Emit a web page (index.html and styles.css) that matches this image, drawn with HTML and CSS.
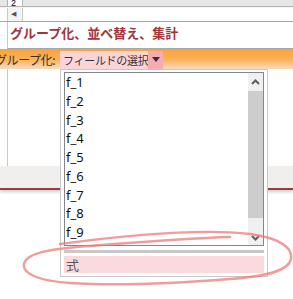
FILE: index.html
```html
<!DOCTYPE html>
<html>
<head>
    <title>グループ化、並べ替え、集計</title>
    <link rel="stylesheet" href="styles.css">
</head>
<body>
    <div class="topstrip">
        <div class="tab">2</div>
    </div>
    <div class="hscroll">
        <div class="arrowbtn">&#9664;</div>
    </div>
    <div class="panel">
        <h2 class="title">グループ化、並べ替え、集計</h2>
    </div>
    <div class="groupbar">
        <span class="grouplabel">グループ化:</span>
        <div class="picker">
            <span class="pickertext">フィールドの選択</span>
            <span class="pickerarrow">
                <svg width="8" height="5" viewBox="0 0 8 5"><path d="M0 0h8L4 5z" fill="#333"/></svg>
            </span>
        </div>
    </div>
    <div class="workarea">
        <div class="leftpane"></div>
        <div class="band"></div>
    </div>

    <div class="popup">
        <div class="list">
            <ul class="items">
                <li>f_1</li>
                <li>f_2</li>
                <li>f_3</li>
                <li>f_4</li>
                <li>f_5</li>
                <li>f_6</li>
                <li>f_7</li>
                <li>f_8</li>
                <li>f_9</li>
            </ul>
            <div class="vscroll">
                <div class="sbtn">
                    <svg width="9" height="6" viewBox="0 0 9 6"><path d="M1 5L4.5 1.5L8 5" fill="none" stroke="#606060" stroke-width="2"/></svg>
                </div>
                <div class="thumb"></div>
                <div class="sbtn sbtn-down">
                    <svg width="9" height="6" viewBox="0 0 9 6"><path d="M1 1L4.5 4.5L8 1" fill="none" stroke="#606060" stroke-width="2"/></svg>
                </div>
            </div>
        </div>
        <div class="sep"></div>
        <div class="expr">式</div>
    </div>

    <svg class="scribble" width="293" height="299" viewBox="0 0 293 299">
        <path d="M60 244 C120 236 200 228 250 234 C280 238 293 248 291 259 C289 270 270 276 230 279 C180 283 120 286 70 283 C40 281 22 274 24 264 C26 254 45 249 90 246 C140 242 190 238 230 237"
              fill="none" stroke="#ec7a7a" stroke-opacity="0.75" stroke-width="2.4" stroke-linecap="round"/>
    </svg>
</body>
</html>
```

FILE: styles.css
```css
body {
    margin: 0;
    width: 293px;
    height: 299px;
    overflow: hidden;
    position: relative;
    background: #fff;
    font-family: "Noto Sans CJK JP", "Noto Sans", sans-serif;
}
.topstrip {
    height: 6px;
    background: #e6e6e6;
    border-bottom: 1px solid #b4b4b4;
    padding-left: 7px;
    display: flex;
}
.tab {
    width: 14px;
    height: 6px;
    background: #fff;
    border-left: 1px solid #b4b4b4;
    border-right: 1px solid #b4b4b4;
    font: 9px/6px "Liberation Sans", sans-serif;
    text-indent: 3px;
    overflow: hidden;
}
.hscroll {
    height: 13px;
    border-bottom: 1px solid #a8a8a8;
    border-top: 1px solid #f4f4f4;
    padding-left: 7px;
    display: flex;
}
.arrowbtn {
    width: 14px;
    border-left: 1px solid #c8c8c8;
    border-right: 1px solid #c8c8c8;
    background: #f4f4f4;
    color: #555;
    font: 7px/13px "DejaVu Sans", sans-serif;
    text-indent: 3px;
}
.panel {
    height: 26px;
    margin-left: 7px;
    border-left: 1px solid #c8c8c8;
    border-bottom: 1px solid #a8a8a8;
}
.title {
    margin: 0;
    padding: 2px 0 0 2px;
    font-size: 13px;
    line-height: 18px;
    font-weight: bold;
    color: #a3343a;
}
.groupbar {
    height: 20px;
    display: flex;
    align-items: center;
    background: linear-gradient(#f9a23c, #fdb25a 55%, #f5dcc4);
}
.grouplabel {
    font-size: 12px;
    color: #333;
    margin-left: -5px;
    letter-spacing: -0.4px;
    width: 65px;
    white-space: nowrap;
}
.picker {
    display: flex;
    height: 18px;
    margin-top: 1px;
    background: #fbd4d7;
}
.pickertext {
    width: 85px;
    padding-left: 3px;
    font-size: 11px;
    line-height: 18px;
    color: #333;
    letter-spacing: -0.3px;
    white-space: nowrap;
    overflow: hidden;
}
.pickerarrow {
    width: 15px;
    background: #f6aab2;
    display: flex;
    align-items: center;
    justify-content: center;
}
.workarea {
    display: flex;
    flex-direction: column;
}
.leftpane {
    height: 97px;
    margin-left: 7px;
    border-left: 1px solid #c8c8c8;
}
.band {
    height: 22px;
    background: #f0efee;
    border-bottom: 2px solid #9e3a3a;
    box-shadow: 0 2px 3px rgba(0, 0, 0, 0.2);
}
.popup {
    position: absolute;
    left: 60px;
    top: 69px;
    width: 200px;
    height: 202px;
    padding: 2px 3px;
    border: 1px solid #c8c8c8;
    background: #fff;
}
.list {
    height: 172px;
    border: 1px solid #84868e;
    display: flex;
}
.items {
    list-style: none;
    margin: 0;
    padding: 0 0 0 1px;
    flex: 1;
    font-family: "Noto Sans", sans-serif;
    font-size: 13px;
    line-height: 18.75px;
    color: #111;
}
.vscroll {
    width: 15px;
    display: flex;
    flex-direction: column;
    background: #f0f0f0;
}
.sbtn {
    height: 18px;
    display: flex;
    align-items: center;
    justify-content: center;
}
.sbtn-down {
    align-items: flex-end;
    padding-bottom: 4px;
    height: 23px;
}
.thumb {
    flex: 1;
    background: #cdcdcd;
}
.sep {
    height: 3px;
    margin-top: 4px;
    background: #c8c8c8;
}
.expr {
    height: 17px;
    margin-top: 3px;
    padding-left: 2px;
    background: #fbdadd;
    font-size: 13px;
    line-height: 17px;
    color: #555;
}
.scribble {
    position: absolute;
    left: 0;
    top: 0;
    pointer-events: none;
}
```
